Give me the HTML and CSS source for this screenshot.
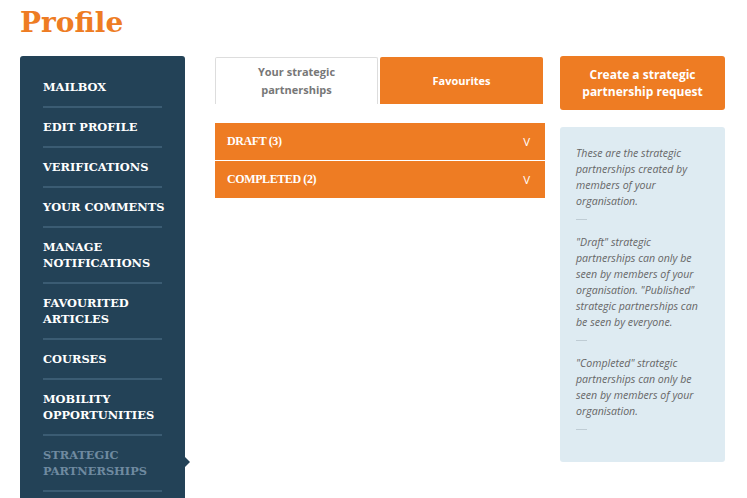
FILE: index.html
```html
<!DOCTYPE html>
<html lang="en">
<head>
  <meta charset="UTF-8" />
  <meta name="viewport" content="width=device-width, initial-scale=1.0" />
  <title>Profile — Strategic partnerships</title>
  <link rel="stylesheet" href="styles.css">
</head>
<body>
  <div class="page">
    <h1 class="page-title">Profile</h1>

    <div class="layout">
      <nav class="sidebar">
        <ul class="menu">
          <li><a href="#">Mailbox</a></li>
          <li><a href="#">Edit profile</a></li>
          <li><a href="#">Verifications</a></li>
          <li><a href="#">Your comments</a></li>
          <li><a href="#">Manage<br>notifications</a></li>
          <li><a href="#">Favourited<br>articles</a></li>
          <li><a href="#">Courses</a></li>
          <li><a href="#">Mobility<br>opportunities</a></li>
          <li class="active"><a href="#">Strategic<br>partnerships</a></li>
        </ul>
      </nav>

      <main class="content">
        <div class="tabs">
          <a href="#" class="tab current">Your strategic partnerships</a>
          <a href="#" class="tab">Favourites</a>
        </div>

        <div class="accordion">
          <div class="acc-row"><span>DRAFT (3)</span><span class="chev">V</span></div>
          <div class="acc-row"><span>COMPLETED (2)</span><span class="chev">V</span></div>
        </div>
      </main>

      <aside class="side">
        <a href="#" class="btn">Create a strategic partnership request</a>
        <div class="info">
          <p>These are the strategic partnerships created by members of your organisation.</p>
          <hr>
          <p>"Draft" strategic partnerships can only be seen by members of your organisation. "Published" strategic partnerships can be seen by everyone.</p>
          <hr>
          <p>"Completed" strategic partnerships can only be seen by members of your organisation.</p>
          <hr>
        </div>
      </aside>
    </div>
  </div>
</body>
</html>
```

FILE: styles.css
```css
:root {
  --orange: #ee7c23;
  --navy: #234257;
  --navy-line: #3b5c73;
  --muted: #6f8aa0;
  --info-bg: #deebf2;
  --text-grey: #666;
}
* { box-sizing: border-box; margin:0; padding:0; }
html, body { height:100%; }
body { background:#fff; font-family:'Open Sans', sans-serif; overflow:hidden; }
a { text-decoration:none; }

.page { padding:0 20px; }
.page-title {
  font-family:'DejaVu Serif', serif; font-weight:700; font-size:28px;
  color:var(--orange); line-height:46px; height:56px;
}

.layout { display:flex; align-items:flex-start; }

.sidebar {
  width:165px; min-height:460px; background:var(--navy);
  border-radius:3px 3px 0 0; padding:12px 23px 0;
}
.menu { list-style:none; }
.menu li { padding:11px 0; border-bottom:2px solid var(--navy-line); position:relative; }
.menu a {
  display:block; font-family:'DejaVu Serif', serif; font-weight:700; font-size:11.4px;
  line-height:16px; color:#fff; text-transform:uppercase; white-space:nowrap;
}
.menu li.active a { color:var(--muted); }
.menu li.active::after {
  content:''; position:absolute; right:-28px; top:21px;
  border-left:5px solid var(--navy); border-top:5px solid transparent; border-bottom:5px solid transparent;
}

.content { width:330px; margin-left:30px; padding-top:1px; }
.tabs { display:flex; gap:2px; }
.tab {
  width:163px; height:47px; display:flex; align-items:center; justify-content:center;
  text-align:center; font-weight:700; font-size:11px; line-height:18px;
  background:var(--orange); color:#fff; border-radius:2px 2px 0 0; padding:0 30px;
}
.tab.current { background:#fff; color:#777; border:1px solid #ddd; border-bottom:none; }

.accordion { margin-top:19px; }
.acc-row {
  display:flex; justify-content:space-between; align-items:center;
  background:var(--orange); color:#fff; height:37px; padding:0 15px 0 12px;
  font-family:'Liberation Serif', serif; font-weight:700; font-size:12px; letter-spacing:-0.4px;
}
.acc-row + .acc-row { border-top:1px solid #fff; height:38px; }
.acc-row .chev { font-family:'Open Sans', sans-serif; font-weight:400; font-size:11.5px; letter-spacing:0; }

.side { width:165px; margin-left:15px; }
.btn {
  display:flex; align-items:center; justify-content:center; height:54px;
  background:var(--orange); color:#fff; border-radius:3px; text-align:center;
  font-weight:700; font-size:12px; line-height:17px; padding:0 18px;
}
.info {
  margin-top:17px; background:var(--info-bg); border-radius:3px;
  padding:18px 16px 18px; min-height:333px;
}
.info p { font-style:italic; font-size:10.6px; line-height:16px; color:var(--text-grey); }
.info hr { width:11px; border:none; border-top:1px solid #bfccd4; margin:10px 0 14px; }
```
